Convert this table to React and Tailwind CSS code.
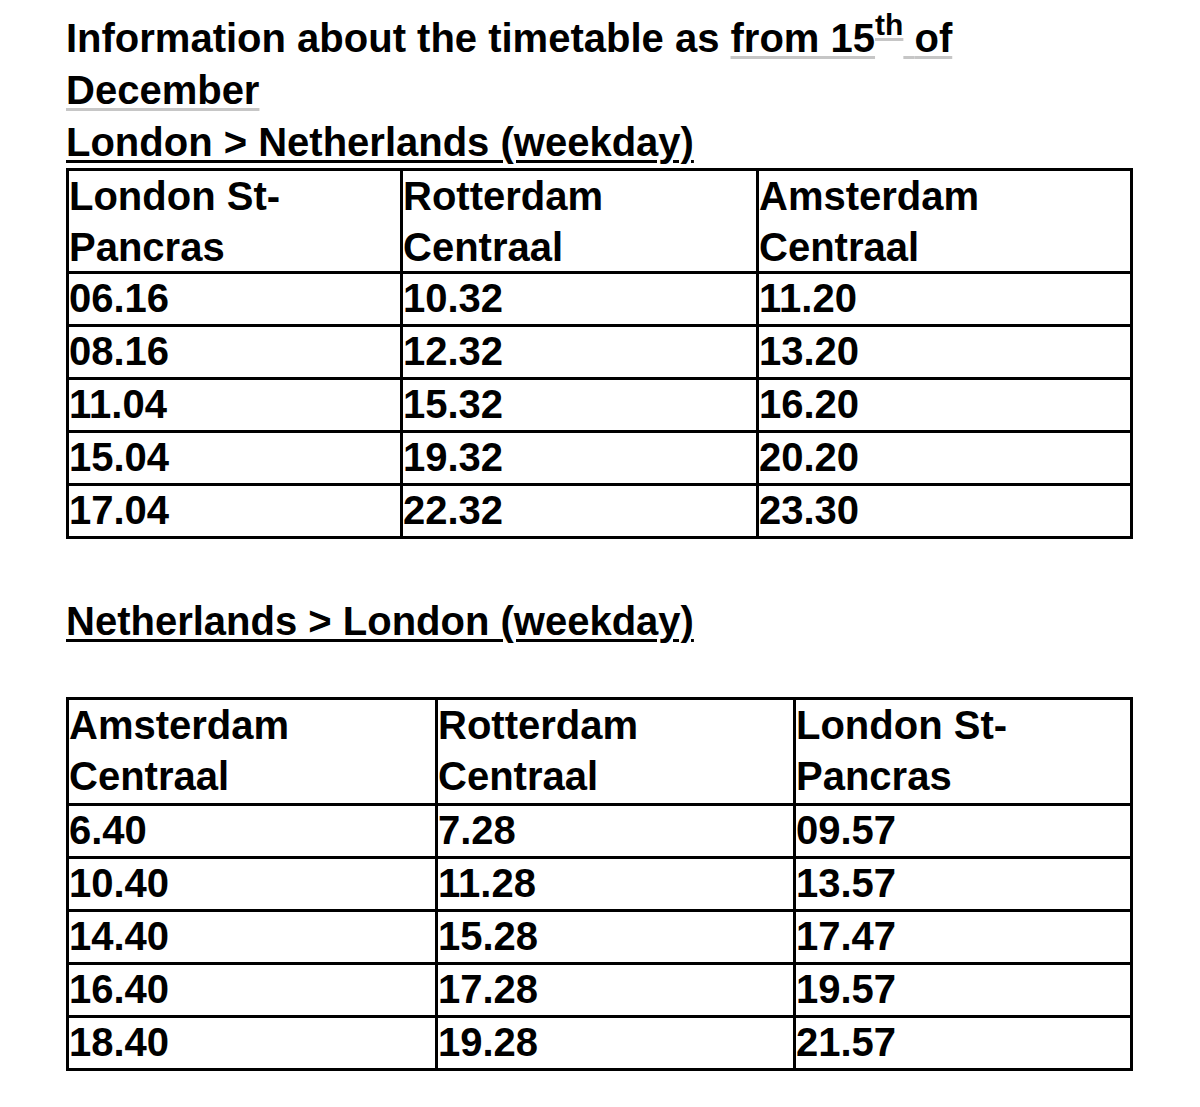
const outbound = {
  cols: "grid-cols-[334px_356px_374px]",
  header: ["London St-|Pancras", "Rotterdam|Centraal", "Amsterdam|Centraal"],
  headerHeight: "h-[103px]",
  rows: [
    ["06.16", "10.32", "11.20"],
    ["08.16", "12.32", "13.20"],
    ["11.04", "15.32", "16.20"],
    ["15.04", "19.32", "20.20"],
    ["17.04", "22.32", "23.30"],
  ],
};

const inbound = {
  cols: "grid-cols-[369px_358px_337px]",
  header: ["Amsterdam|Centraal", "Rotterdam|Centraal", "London St-|Pancras"],
  headerHeight: "h-[106px]",
  rows: [
    ["6.40", "7.28", "09.57"],
    ["10.40", "11.28", "13.57"],
    ["14.40", "15.28", "17.47"],
    ["16.40", "17.28", "19.57"],
    ["18.40", "19.28", "21.57"],
  ],
};

function Timetable({ table }) {
  return (
    <div className={`grid ${table.cols} w-[1067px] border-l-[3px] border-t-[3px] border-black`}>
      {table.header.map((label) => {
        const [first, second] = label.split("|");
        return (
          <div
            key={label}
            className={`${table.headerHeight} border-r-[3px] border-b-[3px] border-black leading-[51px]`}
          >
            {first}
            <br />
            {second}
          </div>
        );
      })}
      {table.rows.map((row, i) =>
        row.map((time, j) => (
          <div
            key={`${i}-${j}`}
            className="h-[53px] border-r-[3px] border-b-[3px] border-black leading-[49px]"
          >
            {time}
          </div>
        ))
      )}
    </div>
  );
}

export default function App() {
  return (
    <div className="min-h-[1107px] bg-white text-black font-['Liberation_Sans',Arial,sans-serif] font-bold text-[40px] pl-[66px] pt-[12px]">
      {/* Title */}
      <div className="leading-[52px] whitespace-nowrap">
        Information about the timetable as{" "}
        <span className="underline decoration-[#c6c6c6] decoration-[3px] underline-offset-[4px]">
          from 15
        </span>
        <sup className="text-[30px] top-[-17px] underline decoration-[#c6c6c6] decoration-[3px] underline-offset-[3px]">
          th
        </sup>
        <span className="underline decoration-[#c6c6c6] decoration-[3px] underline-offset-[4px]">
          {" "}of
        </span>
        <br />
        <span className="underline decoration-[#c6c6c6] decoration-[3px] underline-offset-[4px]">
          December
        </span>
        <br />
        <span className="underline decoration-[3px] underline-offset-[4px]">
          London &gt; Netherlands (weekday)
        </span>
      </div>

      <Timetable table={outbound} />

      {/* Return direction */}
      <div className="mt-[56px] leading-[52px]">
        <span className="underline decoration-[3px] underline-offset-[4px]">
          Netherlands &gt; London (weekday)
        </span>
      </div>

      <div className="mt-[50px]">
        <Timetable table={inbound} />
      </div>
    </div>
  );
}
